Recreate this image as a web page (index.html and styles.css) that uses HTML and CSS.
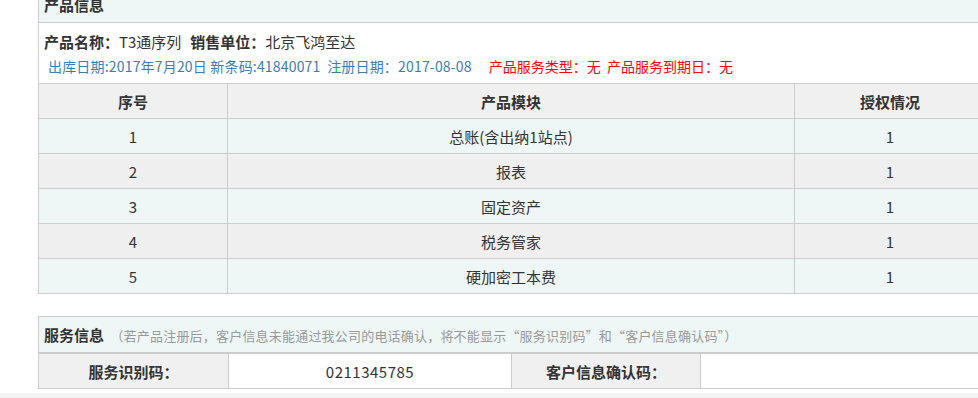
FILE: index.html
```html
<!DOCTYPE html>
<html lang="zh-CN">
<head>
<meta charset="utf-8">
<title>产品信息</title>
<link rel="stylesheet" href="styles.css">
</head>
<body>
<div class="page">
  <section class="panel">
    <div class="panel-head">产品信息</div>
    <div class="info">
      <p class="line1"><b>产品名称：</b><span class="val">T3通序列</span><b>销售单位：</b><span>北京飞鸿至达</span></p>
      <p class="line2"><span class="blue">出库日期:2017年7月20日 新条码:41840071 &nbsp;注册日期：2017-08-08</span><span class="red">产品服务类型：无&nbsp; 产品服务到期日：无</span></p>
    </div>
    <table class="grid">
      <colgroup><col class="c1"><col class="c2"><col class="c3"></colgroup>
      <thead>
        <tr><th>序号</th><th>产品模块</th><th>授权情况</th></tr>
      </thead>
      <tbody>
        <tr class="odd"><td>1</td><td>总账(含出纳1站点)</td><td>1</td></tr>
        <tr class="even"><td>2</td><td>报表</td><td>1</td></tr>
        <tr class="odd"><td>3</td><td>固定资产</td><td>1</td></tr>
        <tr class="even"><td>4</td><td>税务管家</td><td>1</td></tr>
        <tr class="odd"><td>5</td><td>硬加密工本费</td><td>1</td></tr>
      </tbody>
    </table>
  </section>

  <section class="panel service">
    <div class="panel-head">服务信息 <span class="note">（若产品注册后，客户信息未能通过我公司的电话确认，将不能显示“服务识别码”和“客户信息确认码”）</span></div>
    <table class="grid svc">
      <colgroup><col class="s1"><col class="s2"><col class="s3"><col class="s4"></colgroup>
      <tbody>
        <tr><th>服务识别码：</th><td class="code">0211345785</td><th>客户信息确认码：</th><td></td></tr>
      </tbody>
    </table>
  </section>
</div>
<div class="footer-strip"></div>
</body>
</html>
```

FILE: styles.css
```css
html, body {
  margin: 0;
  padding: 0;
  overflow: hidden;
  background: #fff;
}
body {
  font-family: "Noto Sans CJK SC", "Microsoft YaHei", sans-serif;
  font-size: 15px;
  color: #333;
  width: 978px;
  height: 398px;
  position: relative;
}
.page {
  margin-top: -13px;
  padding-left: 38px;
  width: 946px;
}
.panel {
  width: 946px;
  border-left: 1px solid #ccc;
  box-sizing: border-box;
}
.panel-head {
  height: 35px;
  line-height: 35px;
  background: #eef7f6;
  border-bottom: 1px solid #ccc;
  padding-left: 5px;
  font-weight: bold;
  font-size: 15px;
  color: #333;
  white-space: nowrap;
}
.note {
  font-weight: normal;
  font-size: 13px;
  color: #999;
  margin-left: 3px;
  letter-spacing: 0.2px;
}
.info {
  padding: 6px 0 6px 5px;
}
.info p {
  margin: 0;
  white-space: nowrap;
}
.line1 {
  height: 25px;
  line-height: 25px;
  font-size: 15px;
  color: #333;
}
.line1 b {
  font-weight: bold;
}
.line1 .val {
  margin-right: 9px;
}
.line2 {
  height: 23px;
  line-height: 24px;
  font-size: 14px;
  padding-left: 4px;
}
.blue { color: #3a7cb8; letter-spacing: 0.18px; }
.red { color: #f00; margin-left: 17px; }

.grid {
  border-collapse: collapse;
  width: 947px;
  margin-left: -1px;
  table-layout: fixed;
}
.grid th, .grid td {
  border: 1px solid #ccc;
  height: 34px;
  padding: 0;
  text-align: center;
  font-size: 15px;
}
.grid th {
  background: #f0f0f0;
  font-weight: bold;
}
.grid td {
  font-weight: normal;
}
.grid .odd td { background: #eef7f6; }
.grid .even td { background: #efefef; }
.c1 { width: 189px; }
.c2 { width: 567px; }
.c3 { width: 191px; }

.service {
  margin-top: 22px;
  border-top: 1px solid #ccc;
}
.svc td { background: #fff; }
.svc .code { letter-spacing: 0.5px; }
.s1 { width: 190px; }
.s2 { width: 283px; }
.s3 { width: 189px; }
.s4 { width: 285px; }

.footer-strip {
  position: absolute;
  left: 0;
  right: 0;
  top: 393px;
  height: 5px;
  background: #f4f4f4;
}
```
